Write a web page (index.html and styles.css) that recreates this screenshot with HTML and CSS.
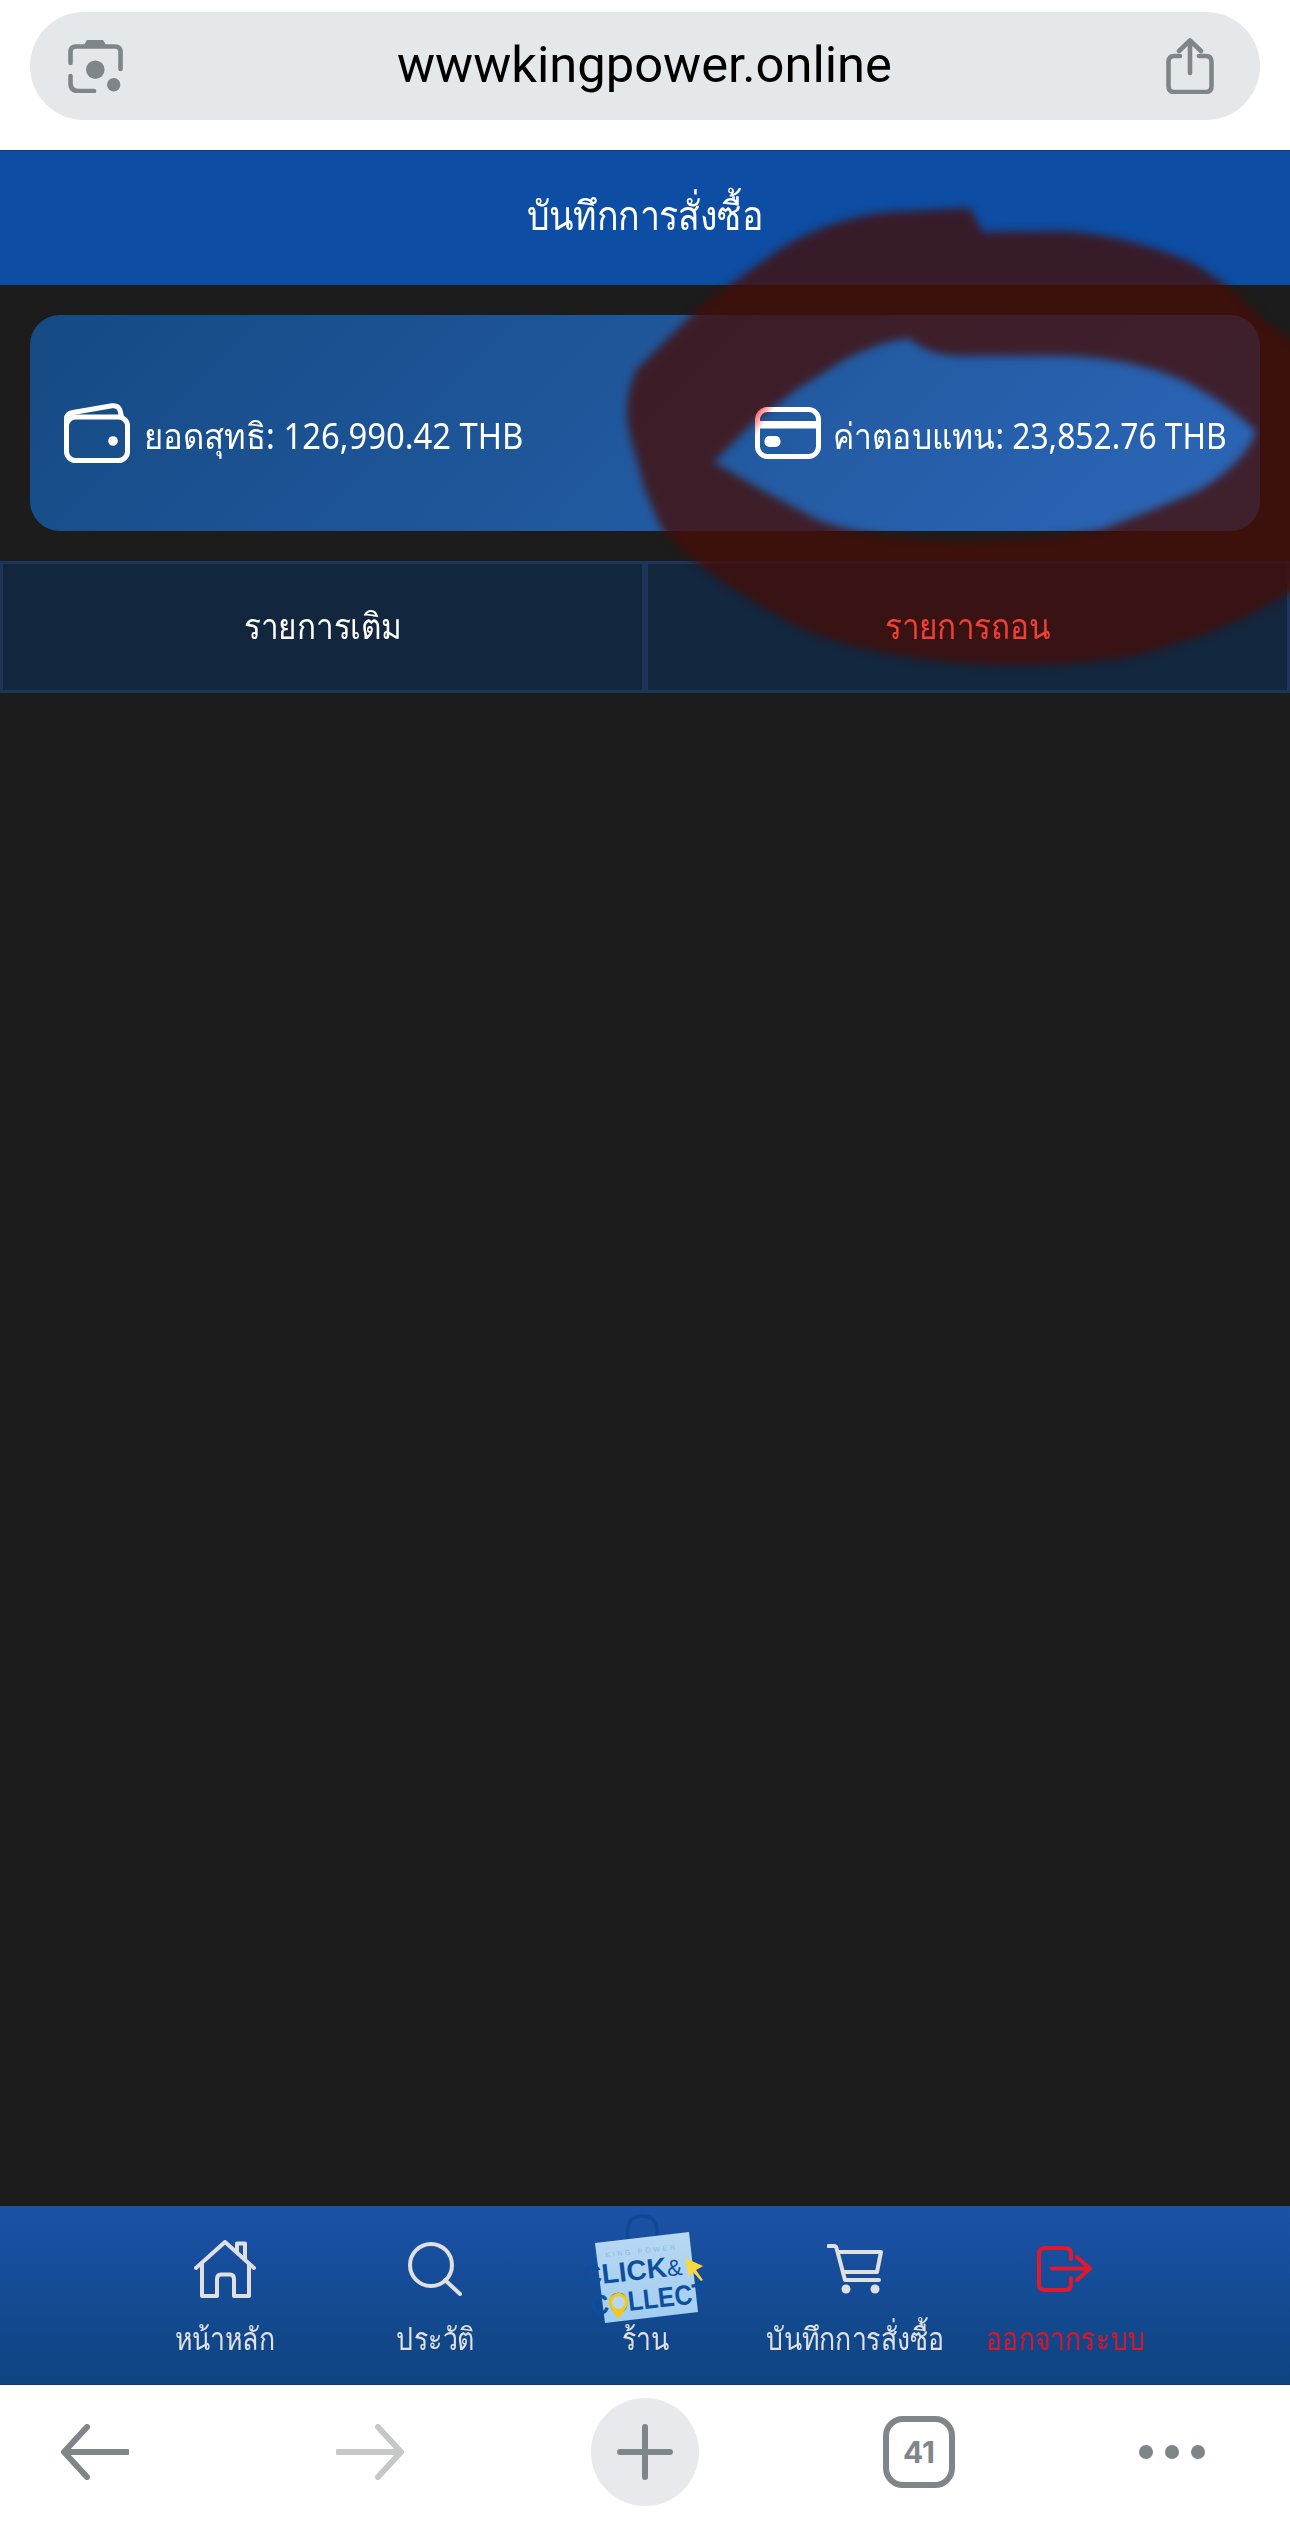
FILE: index.html
```html
<!DOCTYPE html>
<html lang="th">

<head>
    <meta charset="UTF-8">
    <title>บันทึกการสั่งซื้อ</title>
    <link rel="stylesheet" href="styles.css">
</head>

<body>
    <div class="browser-top">
        <div class="url-pill">
            <svg class="lens-icon" viewBox="0 0 55 54" width="55" height="54">
                <path d="M15 7.5 L19 1 H35 L39 7.5 Z" fill="#7f8689"/>
                <path d="M2.5 24 V13 Q2.5 7.5 8 7.5 H47 Q52.5 7.5 52.5 13 V30" class="lens-line"/>
                <path d="M2.5 37 V44 Q2.5 52 10 52 H26" class="lens-line"/>
                <circle cx="27.3" cy="30.7" r="9.3" fill="#7f8689"/>
                <circle cx="45.7" cy="45.7" r="6.7" fill="#7f8689"/>
            </svg>
            <span class="url-text">wwwkingpower.online</span>
            <svg class="share-icon" viewBox="0 0 48 56" width="48" height="56">
                <path d="M14 18 H8 Q2.5 18 2.5 24 V48 Q2.5 54 8 54 H40 Q45.5 54 45.5 48 V24 Q45.5 18 40 18 H33" class="lens-line"/>
                <path d="M24 35 V3 M13 13 L24 2.5 L35 13" class="lens-line"/>
            </svg>
        </div>
    </div>

    <div class="page-title"><span>บันทึกการสั่งซื้อ</span></div>

    <main class="content">
        <section class="balance-card">
            <div class="balance-item">
                <svg viewBox="0 0 66 60" width="66" height="60">
                    <rect x="2.5" y="14" width="61" height="43.5" rx="9" class="icon-line"/>
                    <path d="M2.5 20 V16 Q2.5 10.5 9 9.5 L48 2.8 Q55 2 56.5 9 L57.5 14" class="icon-line"/>
                    <circle cx="49" cy="38" r="4.8" fill="#fff"/>
                </svg>
                <span class="balance-text net-text">ยอดสุทธิ: 126,990.42 THB</span>
            </div>
            <div class="balance-item">
                <svg viewBox="0 0 66 52" width="66" height="52">
                    <defs>
                        <linearGradient id="cardCorner" gradientUnits="userSpaceOnUse" x1="2" y1="2" x2="14" y2="10">
                            <stop offset="0" stop-color="#ff4d4d"/>
                            <stop offset="1" stop-color="#fff"/>
                        </linearGradient>
                    </defs>
                    <rect x="2.5" y="2.5" width="61" height="47" rx="10" fill="none" stroke="url(#cardCorner)" stroke-width="5"/>
                    <rect x="3" y="14" width="60" height="7.5" fill="url(#cardCorner)"/>
                    <rect x="9.5" y="29" width="16" height="11" rx="5" fill="#fff"/>
                </svg>
                <span class="balance-text pay-text">ค่าตอบแทน: 23,852.76 THB</span>
            </div>
        </section>

        <div class="tabs">
            <div class="tab"><span>รายการเติม</span></div>
            <div class="tab tab-active"><span>รายการถอน</span></div>
        </div>
    </main>

    <!-- red marker drawn over the screenshot -->
    <svg class="scribble" viewBox="0 0 1290 760" width="1290" height="760">
        <path fill-rule="evenodd" d="M970 208 L983 232 L1065 231 Q1130 236 1191 262 Q1232 285 1260 317 L1330 370 L1330 570 L1260 610 Q1208 637 1130 657 Q1044 670 957 663 Q870 656 805 630 Q740 597 697 563 L662 530 L645 490 L632 443 Q620 405 636 370 L666 340 L697 310 L736 280 L783 247 Q835 217 888 212 Z
            M909 338 Q925 354 957 356 L1065 356 Q1130 358 1182 380 Q1228 403 1256 432 Q1245 462 1200 490 L1152 510 L1100 530 Q1044 540 957 540 Q870 540 818 520 L762 490 L714 462 L753 423 L796 390 L844 360 Q879 342 909 338 Z"/>
    </svg>

    <nav class="bottom-nav">
        <a class="nav-item">
            <span class="nav-icon">
                <svg viewBox="0 0 62 58" width="62" height="58">
                    <path d="M2 28 L31 2 L60 28 M8 24 V56 H23 V39 Q23 34.5 27 34.5 H36 Q40 34.5 40 39 V56 H55 V24 M43 12 V3.5 H51 V20" class="nav-line"/>
                </svg>
            </span>
            <span class="nav-label">หน้าหลัก</span>
        </a>
        <a class="nav-item">
            <span class="nav-icon">
                <svg viewBox="0 0 54 54" width="54" height="54">
                    <circle cx="23" cy="23" r="21" class="nav-line"/>
                    <path d="M37 38 L52 52" class="nav-line"/>
                </svg>
            </span>
            <span class="nav-label">ประวัติ</span>
        </a>
        <a class="nav-item">
            <span class="nav-icon"></span>
            <span class="nav-label">ร้าน</span>
            <svg class="bag" viewBox="0 0 150 140" width="150" height="140">
                <defs>
                    <linearGradient id="bagFill" x1="0" y1="0" x2="0" y2="1">
                        <stop offset="0" stop-color="#b8d8f2"/>
                        <stop offset="1" stop-color="#a2cdf0"/>
                    </linearGradient>
                </defs>
                <path d="M57.5 37 V27 Q57.5 10 72 10 Q87 10 87 26 V34" fill="none" stroke="#0e4a94" stroke-width="3.5"/>
                <path d="M25 37 L119 26 L128 106 L35 117 Z" fill="url(#bagFill)"/>
                <g transform="rotate(-6.5 75 70)">
                    <text x="38" y="47" textLength="70" class="bag-small">KING POWER</text>
                    <text x="12" y="73" class="bag-big">CLICK<tspan class="bag-amp">&amp;</tspan></text>
                    <text x="18" y="103" textLength="117" lengthAdjust="spacingAndGlyphs" class="bag-big">COLLECT</text>
                </g>
                <path d="M48.5 113 L41 102 A9.5 9.5 0 1 1 56 102 Z" fill="#f6c90e"/>
                <circle cx="48.5" cy="96.5" r="6.5" fill="#b8d8f2"/>
                <path d="M115 52 L133 60 L126 64 L133 74 L131 75 L123 66 L119 71 Z" fill="#fbd83c"/>
            </svg>
        </a>
        <a class="nav-item">
            <span class="nav-icon">
                <svg viewBox="0 0 56 50" width="56" height="50">
                    <path d="M1.5 2 H7 Q9 2 9.5 4 L18 36 H52 M11 8 H54 L50 28 H16" class="nav-line"/>
                    <circle cx="19" cy="45" r="4.5" fill="#e0e0e0"/>
                    <circle cx="48" cy="45" r="4.5" fill="#e0e0e0"/>
                </svg>
            </span>
            <span class="nav-label">บันทึกการสั่งซื้อ</span>
        </a>
        <a class="nav-item nav-logout">
            <span class="nav-icon">
                <svg viewBox="0 0 56 46" width="56" height="46">
                    <path d="M34 13 V8 Q34 2 28 2 H8 Q2 2 2 8 V38 Q2 44 8 44 H28 Q34 44 34 38 V32 M15 22.5 H53 M40 11 L53 22.5 L40 34" class="nav-line"/>
                </svg>
            </span>
            <span class="nav-label">ออกจากระบบ</span>
        </a>
    </nav>

    <div class="browser-bottom">
        <svg viewBox="0 0 68 56" width="68" height="56">
            <path d="M66 28 H4 M26 3 L3 28 L26 53" class="bar-line"/>
        </svg>
        <svg viewBox="0 0 68 56" width="68" height="56">
            <path d="M2 28 H64 M42 3 L65 28 L42 53" class="bar-line bar-line-off"/>
        </svg>
        <div class="new-tab">
            <svg viewBox="0 0 56 56" width="56" height="56">
                <path d="M28 3 V53 M3 28 H53" class="bar-line"/>
            </svg>
        </div>
        <div class="tab-count">41</div>
        <div class="more-dots"><i></i><i></i><i></i></div>
    </div>
</body>

</html>
```

FILE: styles.css
```css
* {
    box-sizing: border-box;
}

html,
body {
    margin: 0;
    height: 2537px;
    overflow: hidden;
}

body {
    position: relative;
    display: flex;
    flex-direction: column;
    width: 1290px;
    background-color: #fff;
    font-family: "Noto Sans", "Liberation Sans", sans-serif;
}

.browser-top {
    height: 150px;
    padding: 12px 30px 0;
    background-color: #fff;
}

.url-pill {
    display: flex;
    align-items: center;
    justify-content: space-between;
    height: 108px;
    padding: 0 46px 0 38px;
    border-radius: 54px;
    background-color: #e5e8eb;
}

.url-text {
    margin-bottom: 3px;
    font-family: Roboto, sans-serif;
    font-size: 50.7px;
    color: #000;
}

.lens-line {
    fill: none;
    stroke: #7f8689;
    stroke-width: 4.6;
    stroke-linecap: round;
    stroke-linejoin: round;
}

.page-title {
    height: 135px;
    border-top: 1px solid #0b3c80;
    background-color: #0d4da3;
    color: #fff;
    font-size: 40px;
    line-height: 128px;
    text-align: center;
}

/* the site's thai font is narrower than anything installed */
.page-title span {
    display: inline-block;
    transform: scaleX(0.894);
}

.content {
    flex: 1;
    padding-top: 30px;
    background-color: #1c1c1c;
}

.balance-card {
    display: grid;
    grid-template-columns: 691px auto;
    align-items: center;
    height: 216px;
    margin: 0 30px;
    padding: 20px 0 0 34px;
    border-radius: 30px;
    background: linear-gradient(135deg, #154a83, #2c66b8);
}

.balance-item {
    position: relative;
    z-index: 2;
    display: flex;
    align-items: center;
    gap: 15px;
    color: #fff;
    font-size: 36px;
}

.balance-text {
    padding-top: 6px;
    transform-origin: left center;
    white-space: nowrap;
}

.net-text {
    margin-left: -1px;
    transform: scaleX(0.911);
}

.pay-text {
    margin-left: -3px;
    transform: scaleX(0.883);
}

.icon-line {
    fill: none;
    stroke: #fff;
    stroke-width: 5;
    stroke-linecap: round;
}

.tabs {
    display: grid;
    grid-template-columns: 1fr 1fr;
    margin-top: 30px;
}

.tab {
    height: 132px;
    border: 3px solid #1f3558;
    background-color: #12263e;
    color: #fff;
    font-size: 36px;
    line-height: 123px;
    text-align: center;
}

.tab span {
    position: relative;
    z-index: 2;
    display: inline-block;
    transform: scaleX(0.875);
}

.tab-active {
    color: #ef4136;
}

.scribble {
    position: absolute;
    top: 0;
    left: 0;
    z-index: 1;
    fill: #450d07;
    opacity: 0.78;
    pointer-events: none;
}

.scribble path {
    filter: blur(4px);
}

.bottom-nav {
    display: grid;
    grid-template-columns: repeat(5, 210px);
    flex: none;
    height: 179px;
    padding: 32px 120px 0;
    border-bottom: 1px solid #0b3a6e;
    background: linear-gradient(180deg, #1b52a8, #0e4480);
}

.nav-item {
    position: relative;
    display: flex;
    flex-direction: column;
    align-items: center;
    color: #e0e0e0;
}

.nav-icon {
    display: flex;
    align-items: center;
    justify-content: center;
    height: 62px;
}

.nav-line {
    fill: none;
    stroke: #e0e0e0;
    stroke-width: 4;
    stroke-linecap: round;
    stroke-linejoin: round;
}

.nav-label {
    margin-top: 18px;
    font-size: 31px;
    line-height: 40px;
    white-space: nowrap;
    transform: scaleX(0.86);
}

.nav-logout {
    color: #dc1528;
}

.nav-logout .nav-line {
    stroke: #e1192d;
}

.bag {
    position: absolute;
    top: -32px;
    left: 30px;
    overflow: visible;
}

.bag-small {
    font-family: "Liberation Sans", sans-serif;
    font-size: 7px;
    fill: #8bb9e0;
}

.bag-big {
    font-family: "Liberation Sans", sans-serif;
    font-size: 28px;
    font-weight: 700;
    fill: #0d4f9e;
}

.bag-amp {
    font-size: 23px;
    font-weight: 400;
}

.browser-bottom {
    display: grid;
    grid-template-columns: 190px 360px 190px 358px 148px;
    align-items: center;
    justify-items: center;
    flex: none;
    height: 152px;
    padding-bottom: 18px;
    background-color: #fff;
}

.bar-line {
    fill: none;
    stroke: #7f8689;
    stroke-width: 6;
    stroke-linecap: round;
    stroke-linejoin: round;
}

.bar-line-off {
    stroke: #c6c7c7;
}

.new-tab {
    display: flex;
    align-items: center;
    justify-content: center;
    width: 108px;
    height: 108px;
    border-radius: 50%;
    background-color: #e8e9ed;
}

.tab-count {
    width: 72px;
    height: 72px;
    border: 6px solid #7f8689;
    border-radius: 20px;
    color: #7f8689;
    font-family: Inter, sans-serif;
    font-size: 30px;
    font-weight: 700;
    line-height: 60px;
    text-align: center;
}

.more-dots {
    display: flex;
    gap: 12px;
}

.more-dots i {
    width: 14px;
    height: 14px;
    border-radius: 50%;
    background-color: #7f8689;
}
```
